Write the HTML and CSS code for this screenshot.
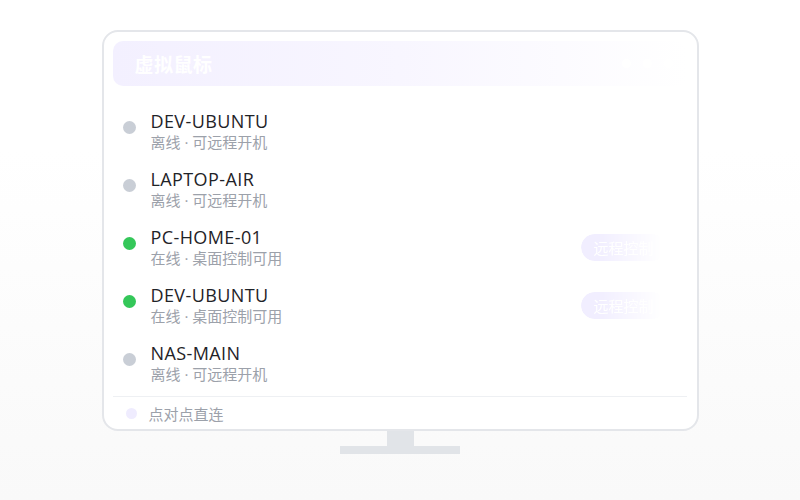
FILE: index.html
```html
<!DOCTYPE html>
<html lang="zh-CN">
<head>
    <meta charset="UTF-8">
    <meta name="viewport" content="width=device-width, initial-scale=1.0">
    <title>虚拟鼠标</title>
    <link rel="stylesheet" href="styles.css">
</head>
<body>
    <div class="monitor">
        <div class="screen">
            <div class="header">
                <span class="title">虚拟鼠标</span>
                <span class="header-dots"><i></i><i></i><i></i></span>
            </div>
            <ul class="devices">
                <li class="device">
                    <span class="dot"></span>
                    <div class="info">
                        <div class="name">DEV-UBUNTU</div>
                        <div class="status">离线 · 可远程开机</div>
                    </div>
                </li>
                <li class="device">
                    <span class="dot"></span>
                    <div class="info">
                        <div class="name">LAPTOP-AIR</div>
                        <div class="status">离线 · 可远程开机</div>
                    </div>
                </li>
                <li class="device">
                    <span class="dot online"></span>
                    <div class="info">
                        <div class="name">PC-HOME-01</div>
                        <div class="status">在线 · 桌面控制可用</div>
                    </div>
                    <button class="remote">远程控制</button>
                </li>
                <li class="device">
                    <span class="dot online"></span>
                    <div class="info">
                        <div class="name">DEV-UBUNTU</div>
                        <div class="status">在线 · 桌面控制可用</div>
                    </div>
                    <button class="remote">远程控制</button>
                </li>
                <li class="device">
                    <span class="dot"></span>
                    <div class="info">
                        <div class="name">NAS-MAIN</div>
                        <div class="status">离线 · 可远程开机</div>
                    </div>
                </li>
            </ul>
            <div class="footer">
                <span class="footer-dot"></span>
                <span>点对点直连</span>
            </div>
        </div>
        <div class="neck"></div>
        <div class="base"></div>
    </div>
</body>
</html>
```

FILE: styles.css
```css
body {
    margin: 0;
    height: 500px;
    font-family: "Open Sans", "Noto Sans CJK SC", sans-serif;
    background: linear-gradient(#ffffff 0%, #ffffff 30%, #f9f9f9 100%);
}
.monitor {
    display: flex;
    flex-direction: column;
    align-items: center;
    padding-top: 30px;
}
.screen {
    box-sizing: border-box;
    width: 597px;
    height: 401px;
    border: 2px solid #e4e6ea;
    border-radius: 16px;
    background: #ffffff;
    padding: 9px 10px 0 9px;
    display: flex;
    flex-direction: column;
}
.header {
    height: 45px;
    border-radius: 10px;
    background: linear-gradient(90deg, #f3f0ff 0%, #f8f6ff 50%, #ffffff 100%);
    display: flex;
    align-items: center;
    justify-content: space-between;
    padding: 0 14px 0 22px;
}
.title {
    color: #ffffff;
    font-size: 19px;
    font-weight: bold;
    letter-spacing: 0.5px;
}
.header-dots {
    display: flex;
    gap: 12px;
}
.header-dots i {
    width: 9px;
    height: 9px;
    border-radius: 50%;
    background: #ffffff;
}
.devices {
    list-style: none;
    margin: 16px 0 0;
    padding: 0;
}
.device {
    height: 42px;
    padding: 8px 0 8px 10px;
    display: flex;
    align-items: center;
}
.dot {
    width: 13px;
    height: 13px;
    border-radius: 50%;
    background: #c9ced6;
    align-self: flex-start;
    margin-top: 11px;
    margin-right: 15px;
}
.dot.online {
    background: #34c759;
}
.info {
    flex: 1;
}
.name {
    font-size: 18px;
    line-height: 22px;
    color: #1f2328;
    letter-spacing: 0.4px;
}
.status {
    font-size: 15px;
    line-height: 20px;
    color: #9ca1aa;
}
.remote {
    margin-right: 21px;
    height: 27px;
    padding: 0 12px;
    border: none;
    border-radius: 14px;
    background: #f1eeff;
    color: #ffffff;
    font-family: inherit;
    font-size: 15px;
    -webkit-mask-image: linear-gradient(90deg, #000 20%, transparent 95%);
    mask-image: linear-gradient(90deg, #000 20%, transparent 95%);
}
.footer {
    margin-top: 4px;
    border-top: 1px solid #eef0f3;
    display: flex;
    align-items: center;
    height: 32px;
    padding-left: 13px;
    font-size: 15px;
    color: #9ca1aa;
}
.footer-dot {
    width: 11px;
    height: 11px;
    border-radius: 50%;
    background: #efecfe;
    margin-right: 12px;
}
.neck {
    width: 27px;
    height: 15px;
    background: #e1e4e8;
}
.base {
    width: 120px;
    height: 8px;
    background: #e1e4e8;
}
```
